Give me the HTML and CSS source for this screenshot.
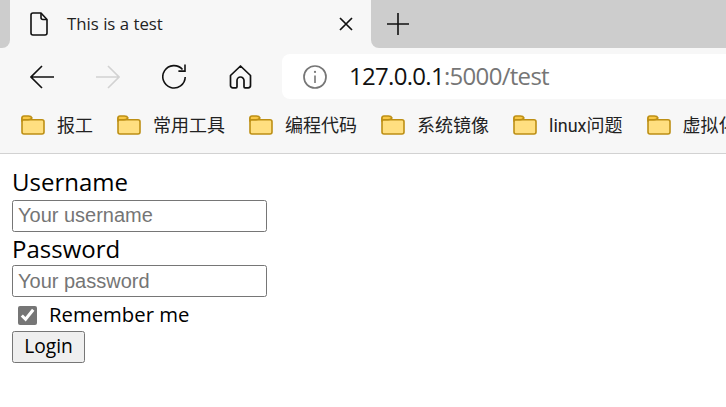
FILE: index.html
```html
<!DOCTYPE html>
<html lang="en">
<head>
<meta charset="utf-8">
<title>This is a test</title>
<link rel="stylesheet" href="styles.css">
</head>
<body>
<header class="chrome">
  <div class="strip">
    <div class="strip-left"></div>
    <div class="tab">
      <svg class="tab-icon" width="18" height="24" viewBox="0 0 18 24" fill="none" stroke="#111" stroke-width="1.6" stroke-linejoin="round"><path d="M3 1h8l6 6.5V21a2 2 0 0 1-2 2H3a2 2 0 0 1-2-2V3a2 2 0 0 1 2-2z"/><path d="M11 1v4.500a2 2 0 0 0 2 2h4" /></svg>
      <span class="tab-title">This is a test</span>
      <svg class="tab-close" width="14" height="14" viewBox="0 0 14 14" stroke="#111" stroke-width="1.7"><path d="M1 1l12 12M13 1L1 13"/></svg>
    </div>
    <div class="strip-right">
      <svg class="new-tab" width="22" height="22" viewBox="0 0 22 22" stroke="#111" stroke-width="1.6"><path d="M11 0v22M0 11h22"/></svg>
    </div>
  </div>
  <div class="toolbar">
    <svg class="nav back" width="24" height="24" viewBox="0 0 24 24" fill="none" stroke="#111" stroke-width="1.6"><path d="M24 12H1M12 1L1 12l11 11"/></svg>
    <svg class="nav forward" width="24" height="24" viewBox="0 0 24 24" fill="none" stroke="#d2d2d2" stroke-width="1.6"><path d="M0 12h23M12 1l11 11-11 11"/></svg>
    <svg class="nav reload" width="24" height="26" viewBox="0 0 24 26" fill="none" stroke="#111" stroke-width="1.6"><path d="M20.500 5.500A11.200 11.200 0 1 0 23.200 13"/><path d="M23 .5v6.600h-6.600"/></svg>
    <svg class="nav home" width="23" height="24" viewBox="0 0 23 24" fill="none" stroke="#111" stroke-width="1.7" stroke-linejoin="round"><path d="M11.500 1L1.500 10.500V20.500a2.300 2.300 0 0 0 2.300 2.300H7a1 1 0 0 0 1-1V15.500a3.500 3.500 0 0 1 7 0V21.800a1 1 0 0 0 1 1h3.200a2.300 2.300 0 0 0 2.300-2.300V10.500z"/></svg>
    <div class="address">
      <svg class="info" width="24" height="24" viewBox="0 0 24 24" fill="none" stroke="#767676" stroke-width="1.7"><circle cx="12" cy="12" r="11"/><path d="M12 10.500v7.500" stroke-width="1.600"/><circle cx="12" cy="6.900" r="1.100" fill="#767676" stroke="none"/></svg>
      <span class="url"><span class="host">127.0.0.1</span><span class="rest">:5000/test</span></span>
    </div>
  </div>
  <nav class="bookmarks">
    <a class="bookmark"><svg class="folder" width="24" height="20" viewBox="0 0 24 20"><use href="#folder-shape"/></svg><span>报工</span></a>
    <a class="bookmark"><svg class="folder" width="24" height="20" viewBox="0 0 24 20"><use href="#folder-shape"/></svg><span>常用工具</span></a>
    <a class="bookmark"><svg class="folder" width="24" height="20" viewBox="0 0 24 20"><use href="#folder-shape"/></svg><span>编程代码</span></a>
    <a class="bookmark"><svg class="folder" width="24" height="20" viewBox="0 0 24 20"><use href="#folder-shape"/></svg><span>系统镜像</span></a>
    <a class="bookmark"><svg class="folder" width="24" height="20" viewBox="0 0 24 20"><use href="#folder-shape"/></svg><span>linux问题</span></a>
    <a class="bookmark"><svg class="folder" width="24" height="20" viewBox="0 0 24 20"><use href="#folder-shape"/></svg><span>虚拟化</span></a>
  </nav>
</header>
<svg class="defs" width="0" height="0"><defs><g id="folder-shape" stroke="#bd8f14" stroke-width="1.600" stroke-linejoin="round"><path d="M3 4.800h18a2 2 0 0 1 2 2V17a2 2 0 0 1-2 2H3a2 2 0 0 1-2-2V3z" fill="#ffdf80"/><path d="M1 5.500V3a2 2 0 0 1 2-2h4.500c1.500 0 3 .8 3.500 2-1 1-2 1.800-4 1.800H3A2 2 0 0 0 1 6z" fill="#f9c846"/></g></defs></svg>
<form class="login">
  <label class="field-label" for="u">Username</label>
  <input class="field" id="u" type="text" placeholder="Your username">
  <label class="field-label field-label-second" for="p">Password</label>
  <input class="field field-second" id="p" type="password" placeholder="Your password">
  <div class="remember">
    <input class="check" id="r" type="checkbox" checked>
    <label for="r">Remember me</label>
  </div>
  <button class="submit" type="button">Login</button>
</form>
</body>
</html>
```
FILE: styles.css
```css
* { box-sizing: border-box; }
html, body { margin: 0; height: 100%; overflow: hidden; background: #fff; }
body { font-family: "Open Sans", "Noto Sans", sans-serif; color: #000; }
.defs { display: block; height: 0; }
.chrome { background: #f7f7f7; border-bottom: 1px solid #d2d2d2; height: 154px; }
.strip { display: flex; height: 48px; }
.strip-left { width: 10px; background: #cdcdcd; border-bottom-right-radius: 8px; }
.tab { width: 361px; display: flex; align-items: center; padding: 0 18px 0 20px; border-top-left-radius: 6px; border-top-right-radius: 6px; }
.tab-title { font-size: 16.800px; margin: 0 0 2px 19px; flex: 1; color: #222; }
.strip-right { flex: 1; background: #cdcdcd; border-bottom-left-radius: 8px; display: flex; align-items: center; padding-left: 16px; }
.toolbar { display: flex; align-items: center; height: 53px; padding: 6px 0 2px 30px; }
.nav { flex: none; }
.forward { margin-left: 42px; }
.reload { margin-left: 42px; }
.home { margin-left: 43px; }
.address { margin-left: 30px; flex: 1; height: 45px; background: #fff; border-radius: 8px 0 0 8px; display: flex; align-items: center; padding-left: 21px; }
.url { margin-left: 22px; font-size: 24px; letter-spacing: -0.7px; white-space: nowrap; position: relative; top: -1px; }
.host { color: #111; }
.rest { color: #767676; }
.bookmarks { display: flex; align-items: center; height: 52px; padding: 0 0 5px 21px; gap: 24px; overflow: hidden; white-space: nowrap; }
.bookmark { display: flex; align-items: center; gap: 12px; flex: none; font-size: 18px; font-family: Roboto, "Noto Sans CJK SC", sans-serif; color: #222; }
.bookmark span { margin-bottom: 2px; }
.folder { flex: none; }
.login { padding: 14px 12px 0; }
.field-label { display: block; height: 32px; font-size: 24px; line-height: 28px; }
.field-label-second { line-height: 31px; }
.field { display: block; width: 255px; height: 32px; margin: 0 0 1px; padding: 0 5px 1px; border: 1px solid #767676; border-radius: 2.500px; font-family: "Liberation Sans", Arial, sans-serif; font-size: 20px; background: #fff; }
.field-second { padding-bottom: 0; }
.field::placeholder { color: #757575; opacity: 1; }
.remember { display: flex; align-items: center; height: 33px; padding: 0 0 1px 6px; font-size: 20.300px; }
.check { width: 19px; height: 19px; margin: 2px 12px 0 0; accent-color: #767676; }
.submit { display: block; width: 73px; height: 32px; padding: 0 0 5px; border: 1px solid #767676; border-radius: 2.500px; background: #efefef; color: #000; font-family: "Open Sans", sans-serif; font-size: 19.200px; }
```
